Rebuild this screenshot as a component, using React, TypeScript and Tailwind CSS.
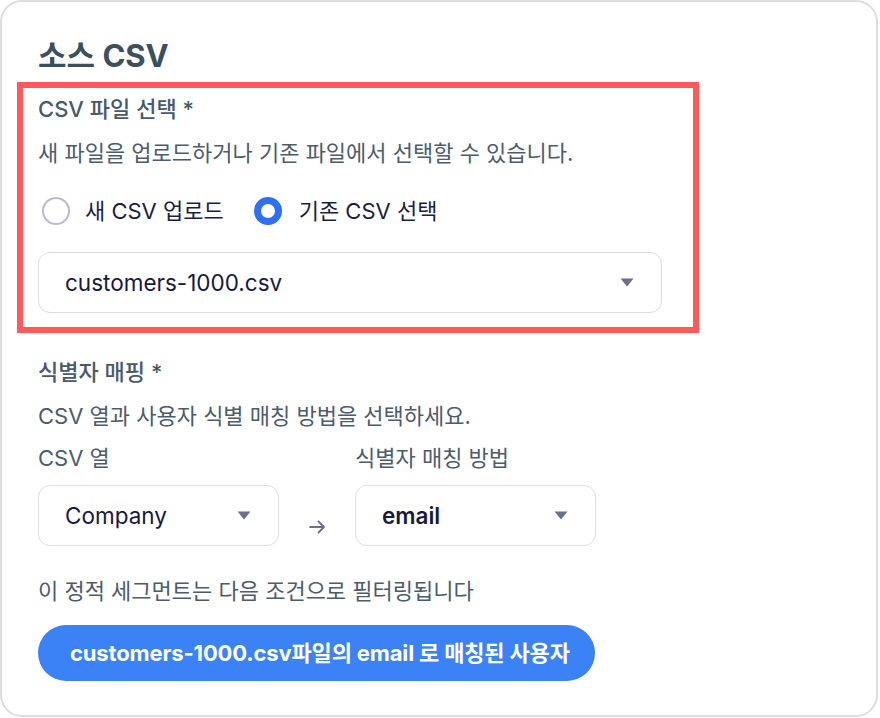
import React from "react";

const F = { fontFamily: '"Inter", "Noto Sans CJK KR", sans-serif' };

function Caret() {
  return (
    <svg width="14" height="9" viewBox="0 0 14 9" className="shrink-0">
      <path d="M0.5 0.5 L13.5 0.5 L7 8.5 Z" fill="#6b6f8a" />
    </svg>
  );
}

function Select({ value, width, bold }: { value: string; width: string; bold?: boolean }) {
  return (
    <div
      className={`${width} h-[61px] rounded-[12px] border border-[#dcdde4] bg-white flex items-center justify-between pl-[26px] pr-[27px]`}
    >
      <span className={`text-[22.5px] leading-[30px] text-[#161a3d] ${bold ? "font-semibold" : ""}`}>{value}</span>
      <Caret />
    </div>
  );
}

export default function App() {
  return (
    <div className="w-[880px] h-[718px] bg-white" style={F}>
      <div className="w-[878px] h-[717px] border-2 border-[#dddddd] rounded-[22px] pl-[36px] pt-[35px] flex flex-col">
        <h1 className="text-[31px] leading-[38px] font-bold text-[#3b4f5e]">소스 CSV</h1>

        <div className="mt-[7px] -ml-[21px] w-[682px] border-[6px] border-[#ff5a5a] pl-[15px] pt-[6px] pb-[14px]">
          <div className="text-[22px] leading-[30px] font-medium text-[#485a69]">CSV 파일 선택 *</div>
          <div className="mt-[14px] text-[22px] leading-[30px] text-[#4c5c6a]">
            새 파일을 업로드하거나 기존 파일에서 선택할 수 있습니다.
          </div>
          <div className="mt-[29px] flex items-center h-[28px]">
            <span className="ml-[4px] w-[28px] h-[28px] rounded-full border-[2.5px] border-[#b9bcca] bg-white" />
            <span className="ml-[15px] text-[22px] leading-[30px] text-[#1a1f3d]">새 CSV 업로드</span>
            <span className="ml-[30px] w-[28px] h-[28px] rounded-full border-[7px] border-[#2f6ff3] bg-white" />
            <span className="ml-[17px] text-[22px] leading-[30px] text-[#1a1f3d]">기존 CSV 선택</span>
          </div>
          <div className="mt-[27px]">
            <Select value="customers-1000.csv" width="w-[624px]" />
          </div>
        </div>

        <div className="mt-[24px] text-[22px] leading-[30px] font-medium text-[#485a69]">식별자 매핑 *</div>
        <div className="mt-[14px] text-[22px] leading-[30px] text-[#4c5c6a]">
          CSV 열과 사용자 식별 매칭 방법을 선택하세요.
        </div>
        <div className="mt-[12px] flex">
          <div className="w-[317px] text-[22px] leading-[30px] text-[#4c5c6a]">CSV 열</div>
          <div className="text-[22px] leading-[30px] text-[#4c5c6a]">식별자 매칭 방법</div>
        </div>
        <div className="mt-[12px] flex items-start">
          <Select value="Company" width="w-[241px]" />
          <div className="w-[76px] h-[61px] flex items-end justify-center pb-[12px]">
            <svg width="17" height="14" viewBox="0 0 17 14" fill="none">
              <path d="M1 7 H15 M9.5 1.5 L15 7 L9.5 12.5" stroke="#6b6f8a" strokeWidth="1.8" strokeLinecap="round" strokeLinejoin="round" />
            </svg>
          </div>
          <Select value="email" width="w-[241px]" bold />
        </div>

        <div className="mt-[30px] text-[22px] leading-[30px] text-[#4c5c6a]">
          이 정적 세그먼트는 다음 조건으로 필터링됩니다
        </div>
        <div className="mt-[19px] w-[557px] h-[56px] rounded-full bg-[#3b82f6] flex items-center pl-[32px]">
          <span className="text-[22px] font-bold text-white tracking-[-0.15px]">
            customers-1000.csv파일의 email 로 매칭된 사용자
          </span>
        </div>
      </div>
    </div>
  );
}
